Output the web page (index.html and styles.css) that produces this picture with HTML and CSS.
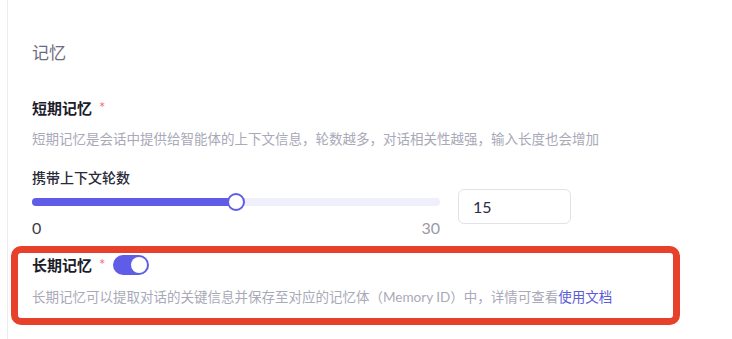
FILE: index.html
```html
<!DOCTYPE html>
<html lang="zh-CN">
<head>
  <meta charset="UTF-8">
  <meta name="viewport" content="width=device-width, initial-scale=1.0">
  <title>记忆</title>
  <link rel="stylesheet" href="styles.css">
</head>
<body>
  <div class="panel">
    <h2 class="section-title">记忆</h2>

    <div class="field">
      <div class="field-label">短期记忆 <span class="required">*</span></div>
      <p class="field-desc">短期记忆是会话中提供给智能体的上下文信息，轮数越多，对话相关性越强，输入长度也会增加</p>
    </div>

    <div class="field slider-field">
      <div class="sub-label">携带上下文轮数</div>
      <div class="slider-row">
        <div class="slider">
          <div class="slider-rail">
            <div class="slider-track" style="width: 50%"></div>
            <div class="slider-handle" style="left: 50%"></div>
          </div>
          <div class="slider-marks">
            <span class="mark active">0</span>
            <span class="mark">30</span>
          </div>
        </div>
        <input class="number-input" type="text" value="15">
      </div>
    </div>

    <div class="field long-term">
      <div class="field-label">
        长期记忆 <span class="required">*</span>
        <span class="switch on"><span class="switch-knob"></span></span>
      </div>
      <p class="field-desc">长期记忆可以提取对话的关键信息并保存至对应的记忆体（Memory ID）中，详情可查看<a class="doc-link" href="#">使用文档</a></p>
    </div>
  </div>
</body>
</html>
```

FILE: styles.css
```css
*,
*::before,
*::after {
  margin: 0;
  padding: 0;
  box-sizing: border-box;
}

body {
  background: #fff;
  font-family: Lato, "Noto Sans CJK SC", sans-serif;
  color: #1f1f2e;
  overflow: hidden;
}

.panel {
  margin-left: 7px;
  min-height: 100vh;
  border-left: 1px solid #ececf0;
  padding: 41px 0 0 24px;
}

.section-title {
  font-size: 17px;
  font-weight: 400;
  line-height: 24px;
  color: #6c6c7e;
  margin-bottom: 32px;
}

.field-label {
  display: flex;
  align-items: center;
  font-size: 15px;
  font-weight: 700;
  line-height: 22px;
  color: #1c1c2b;
}

.required {
  color: #f26d72;
  font-size: 15px;
  font-weight: 400;
  margin-left: 7px;
  align-self: flex-start;
  line-height: 20px;
}

.field-desc {
  font-size: 13.5px;
  line-height: 22px;
  color: #a9a9b8;
  margin-top: 9px;
}

.slider-field {
  margin-top: 17px;
}

.sub-label {
  font-size: 14px;
  font-weight: 500;
  line-height: 22px;
  color: #2a2a38;
}

.slider-row {
  display: flex;
  align-items: flex-start;
}

.slider {
  width: 408px;
}

.slider-rail {
  position: relative;
  height: 26px;
}

.slider-rail::before {
  content: "";
  position: absolute;
  left: 0;
  right: 0;
  top: 9px;
  height: 8px;
  border-radius: 4px;
  background: #f0effc;
}

.slider-track {
  position: absolute;
  left: 0;
  top: 9px;
  height: 8px;
  border-radius: 4px;
  background: #5f5de8;
}

.slider-handle {
  position: absolute;
  top: 4px;
  width: 18px;
  height: 18px;
  margin-left: -9px;
  border-radius: 50%;
  background: #fff;
  border: 2px solid #5f5de8;
}

.slider-marks {
  display: flex;
  justify-content: space-between;
  margin-top: 3px;
  font-size: 16px;
  line-height: 20px;
  color: #9a9aa8;
}

.mark.active {
  color: #3c3c48;
}

.number-input {
  margin-left: 18px;
  width: 113px;
  height: 35px;
  border: 1px solid #e2e2ea;
  border-radius: 6px;
  padding: 0 14px;
  font-family: Lato, "Noto Sans CJK SC", sans-serif;
  font-size: 16px;
  color: #2b2b48;
  outline: none;
}

.long-term {
  position: relative;
  margin-top: 16px;
}

.long-term .field-desc {
  margin-top: 10px;
}

.long-term::after {
  content: "";
  position: absolute;
  left: -21px;
  top: -8px;
  width: 669px;
  height: 79px;
  border: 7px solid #e8412b;
  border-radius: 10px;
  pointer-events: none;
}

.switch {
  display: inline-block;
  position: relative;
  width: 36px;
  height: 20px;
  border-radius: 10px;
  margin-left: 8px;
  background: #5f5de8;
}

.switch-knob {
  position: absolute;
  top: 2px;
  right: 2px;
  width: 16px;
  height: 16px;
  border-radius: 50%;
  background: #fff;
}

.doc-link {
  color: #5b5bd8;
  text-decoration: none;
}
```
